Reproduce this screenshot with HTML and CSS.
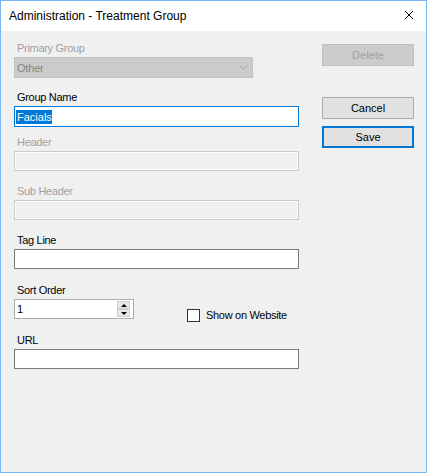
FILE: index.html
```html
<!DOCTYPE html>
<html>
<head>
<meta charset="utf-8">
<link rel="stylesheet" href="styles.css">
</head>
<body>
<div class="window">
  <div class="titlebar">
    <span class="title">Administration - Treatment Group</span>
    <svg class="close" width="10" height="10" viewBox="0 0 10 10"><path d="M1 1L9 9M9 1L1 9" stroke="#000" stroke-width="1" fill="none"/></svg>
  </div>
  <div class="content">
    <div class="fields">
      <div class="field">
        <div class="lbl disabled">Primary Group</div>
        <div class="combo"><span>Other</span><svg class="chev" width="9" height="5" viewBox="0 0 9 5"><path d="M0.5 0.5L4.5 4.5L8.5 0.5" stroke="#a6a6a6" stroke-width="1" fill="none"/></svg></div>
      </div>
      <div class="field f-group">
        <div class="lbl">Group Name</div>
        <div class="box box-focus"><span class="sel">Facials</span></div>
      </div>
      <div class="field f-header">
        <div class="lbl disabled">Header</div>
        <div class="box box-disabled"></div>
      </div>
      <div class="field f-normal">
        <div class="lbl disabled">Sub Header</div>
        <div class="box box-disabled"></div>
      </div>
      <div class="field f-normal">
        <div class="lbl">Tag Line</div>
        <div class="box"></div>
      </div>
      <div class="field f-wide">
        <div class="lbl">Sort Order</div>
        <div class="sort-row">
          <div class="box num"><span>1</span>
            <div class="spin">
              <div class="spin-btn"><span class="tri-up"></span></div>
              <div class="spin-btn"><span class="tri-down"></span></div>
            </div>
          </div>
          <div class="check">
            <span class="checkbox"></span>
            <span class="check-label">Show on Website</span>
          </div>
        </div>
      </div>
      <div class="field f-wide">
        <div class="lbl">URL</div>
        <div class="box"></div>
      </div>
    </div>
    <div class="buttons">
      <button class="btn btn-disabled">Delete</button>
      <button class="btn btn-cancel">Cancel</button>
      <button class="btn btn-default">Save</button>
    </div>
  </div>
</div>
</body>
</html>
```

FILE: styles.css
```css
html, body {
  margin: 0;
  padding: 0;
  background: #f0f0f0;
}

.window {
  width: 427px;
  height: 473px;
  box-sizing: border-box;
  border: 1px solid #79b6f2;
  background: #f0f0f0;
  display: flex;
  flex-direction: column;
  font-family: "Liberation Sans", Arial, sans-serif;
}

.titlebar {
  height: 30px;
  flex: none;
  background: #ffffff;
  display: flex;
  justify-content: space-between;
  padding: 0 12px 0 8px;
}

.title {
  font-size: 12px;
  line-height: 30px;
  color: #000;
}

.close {
  margin-top: 9px;
}

.content {
  display: flex;
  gap: 23px;
  padding: 11px 0 0 13px;
}

.fields {
  width: 285px;
  display: flex;
  flex-direction: column;
}

.f-group { margin-top: 13px; }
.f-header { margin-top: 9px; }
.f-normal { margin-top: 14px; }
.f-wide { margin-top: 15px; }

.lbl {
  font-size: 11px;
  line-height: 12px;
  letter-spacing: -0.3px;
  padding-left: 3px;
  margin-bottom: 3px;
  color: #000;
}

.lbl.disabled {
  color: #a0a0a0;
}

.combo {
  width: 239px;
  height: 21px;
  box-sizing: border-box;
  border: 1px solid #c2c2c2;
  background: #cccccc;
  color: #858585;
  font-size: 11px;
  letter-spacing: -0.2px;
  padding: 0 4px 0 2px;
  display: flex;
  align-items: center;
  justify-content: space-between;
}

.chev {
  margin-top: -1px;
}

.box {
  height: 20px;
  box-sizing: border-box;
  border: 1px solid #7a7a7a;
  background: #ffffff;
  font-size: 11px;
  padding-left: 2px;
  display: flex;
  align-items: center;
}

.box-focus {
  height: 21px;
  border-color: #0078d7;
  padding-left: 1px;
}

.sel {
  background: #0078d7;
  color: #ffffff;
  line-height: 14px;
  padding-left: 1px;
}

.box-disabled {
  background: #f0f0f0;
  border-color: #cbcbcb;
  box-shadow: inset 0 0 0 1px #fbfbfb;
}

.sort-row {
  display: flex;
  align-items: flex-start;
  height: 20px;
}

.num {
  width: 120px;
  border-color: #acacac;
  padding-right: 3px;
  justify-content: space-between;
}

.spin {
  width: 13px;
  height: 16px;
  display: flex;
  flex-direction: column;
}

.spin-btn {
  flex: 1;
  box-sizing: border-box;
  border: 1px solid #cfcfcf;
  background: #e8e8e8;
  display: flex;
  align-items: center;
  justify-content: center;
}

.tri-up {
  width: 0;
  height: 0;
  border-left: 3px solid transparent;
  border-right: 3px solid transparent;
  border-bottom: 3px solid #000;
}

.tri-down {
  width: 0;
  height: 0;
  border-left: 3px solid transparent;
  border-right: 3px solid transparent;
  border-top: 3px solid #000;
}

.check {
  display: flex;
  align-items: center;
  margin-left: 53px;
  margin-top: 9px;
}

.checkbox {
  width: 13px;
  height: 13px;
  box-sizing: border-box;
  border: 1px solid #333333;
  background: #ffffff;
}

.check-label {
  margin-left: 6px;
  font-size: 11px;
  line-height: 14px;
  letter-spacing: -0.3px;
  color: #000;
}

.buttons {
  width: 92px;
  display: flex;
  flex-direction: column;
}

.btn {
  width: 92px;
  height: 22px;
  box-sizing: border-box;
  padding: 0;
  margin: 0;
  font-family: "Liberation Sans", Arial, sans-serif;
  font-size: 11px;
  color: #000;
  background: #e1e1e1;
  border: 1px solid #adadad;
}

.btn-disabled {
  margin-top: 2px;
  background: #cccccc;
  border-color: #bfbfbf;
  color: #a0a0a0;
}

.btn-cancel {
  margin-top: 31px;
}

.btn-default {
  margin-top: 7px;
  border: 2px solid #0078d7;
}
```
